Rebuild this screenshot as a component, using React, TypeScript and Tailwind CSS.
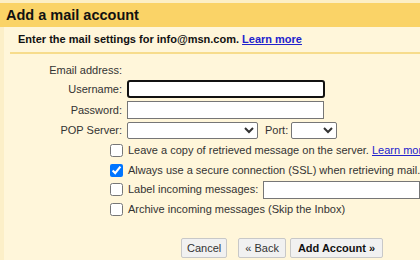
import React from 'react';

const font = { fontFamily: '"Liberation Sans", Arial, sans-serif' };

export default function App() {
    return (
        <div className="w-[420px] h-[260px] overflow-hidden bg-[#fff6da] text-[#222]" style={font}>
            {/* Top strip */}
            <div className="h-[3px] bg-[#fcefc6]" />
            {/* Header */}
            <div className="h-[24px] bg-[#fad367] flex items-center pl-[6px]">
                <h1 className="text-[14.5px] font-bold text-[#111] leading-none">Add a mail account</h1>
            </div>

            <div className="flex h-[233px]">
                <div className="w-[4px] bg-[#fcefc8] shrink-0" />
                <div className="flex-1 min-w-0">
                    {/* Intro */}
                    <div className="ml-[6px] h-[27px] border-b-2 border-[#f7dc8c] flex items-center pl-[8px] whitespace-nowrap">
                        <span className="text-[11px] font-bold text-[#111]">
                            Enter the mail settings for info@msn.com.{' '}
                            <a href="#" className="text-[#2222cc] underline">Learn more</a>
                        </span>
                    </div>

                    {/* Form */}
                    <div className="grid grid-cols-[118px_1fr] gap-x-[5px] text-[11px] text-[#333] mt-[8px] whitespace-nowrap">
                        <div className="text-right h-[17px] leading-[17px]">Email address:</div>
                        <div />

                        <div className="text-right h-[18px] leading-[18px] mt-[1px]">Username:</div>
                        <div className="mt-[1px]">
                            <input
                                type="text"
                                className="w-[198px] h-[18px] bg-white border-2 border-[#111] rounded-[3px] outline-none"
                            />
                        </div>

                        <div className="text-right h-[18px] leading-[18px] mt-[3px]">Password:</div>
                        <div className="mt-[3px]">
                            <input
                                type="password"
                                className="w-[197px] h-[18px] bg-white border border-[#767676] outline-none"
                            />
                        </div>

                        <div className="text-right h-[17px] leading-[17px] mt-[3px]">POP Server:</div>
                        <div className="mt-[3px] flex items-center">
                            <select className="w-[131px] h-[17px] bg-white border border-[#767676] rounded-[2px] text-[11px]">
                                <option />
                            </select>
                            <span className="ml-[7px] mr-[3px]">Port:</span>
                            <select className="w-[46px] h-[17px] bg-white border border-[#767676] rounded-[2px] text-[11px]">
                                <option />
                            </select>
                        </div>
                    </div>

                    {/* Options */}
                    <div className="pl-[106px] mt-[1px] flex flex-col text-[11px] text-[#333] whitespace-nowrap">
                        <label className="h-[20px] flex items-center gap-[5px]">
                            <input type="checkbox" className="w-[13px] h-[13px] m-0 accent-[#0075ff]" />
                            <span>
                                Leave a copy of retrieved message on the server.{' '}
                                <a href="#" className="text-[#2222cc] underline">Learn more</a>
                            </span>
                        </label>
                        <label className="h-[20px] flex items-center gap-[5px]">
                            <input type="checkbox" defaultChecked className="w-[13px] h-[13px] m-0 accent-[#0075ff]" />
                            <span>Always use a secure connection (SSL) when retrieving mail.</span>
                        </label>
                        <label className="h-[19px] flex items-center gap-[5px]">
                            <input type="checkbox" className="w-[13px] h-[13px] m-0 accent-[#0075ff]" />
                            <span>Label incoming messages:</span>
                            <input type="text" className="w-[170px] h-[18px] bg-white border border-[#767676] outline-none" />
                        </label>
                        <label className="h-[20px] flex items-center gap-[5px]">
                            <input type="checkbox" className="w-[13px] h-[13px] m-0 accent-[#0075ff]" />
                            <span>Archive incoming messages (Skip the Inbox)</span>
                        </label>
                    </div>

                    {/* Buttons */}
                    <div className="pl-[177px] mt-[19px] flex items-center text-[11px]">
                        <button className="h-[20px] px-[5px] bg-[#f1f1f1] border border-[#c8c8c8] rounded-[2px] text-[#333]">Cancel</button>
                        <button className="h-[20px] px-[6px] ml-[11px] bg-[#f1f1f1] border border-[#c8c8c8] rounded-[2px] text-[#333]">« Back</button>
                        <button className="h-[20px] px-[7px] ml-[4px] bg-[#f1f1f1] border border-[#c8c8c8] rounded-[2px] text-[#111] font-bold">Add Account »</button>
                    </div>
                </div>
            </div>
        </div>
    );
}
